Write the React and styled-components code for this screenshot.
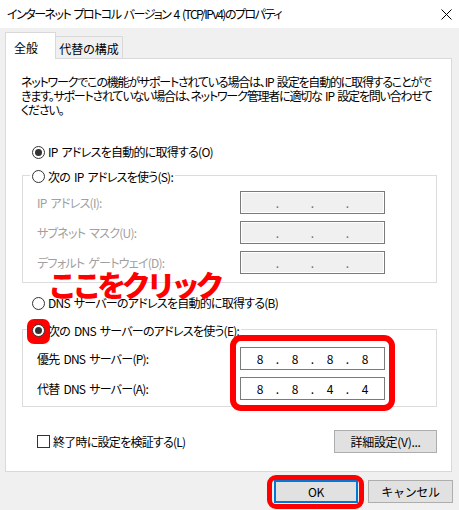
import React from "react";
import styled, { createGlobalStyle } from "styled-components";

const GlobalStyle = createGlobalStyle`
  html, body { margin: 0; padding: 0; background: #f0f0f0; }
  body {
    font-family: "Noto Sans CJK JP", "Noto Sans", sans-serif;
    font-size: 12px;
    color: #000;
    letter-spacing: -0.75px;
    word-spacing: 2px;
    font-feature-settings: "palt" 1;
  }
  * { box-sizing: border-box; }
`;

const Window = styled.div`
  width: 459px;
  height: 510px;
  background: #f0f0f0;
  display: flex;
  flex-direction: column;
  overflow: hidden;
`;

const TitleBar = styled.div`
  height: 28px;
  flex-shrink: 0;
  background: #fff;
  display: flex;
  align-items: center;
  justify-content: space-between;
  padding: 0 7px 0 7px;
`;

const Title = styled.span`
  font-size: 12px;
  line-height: 16px;
  letter-spacing: -1.5px;
  word-spacing: 2px;
  white-space: nowrap;
`;

const CloseButton = styled.span`
  display: flex;
  width: 11px;
  height: 11px;
`;

const TabRow = styled.div`
  display: flex;
  align-items: flex-end;
  height: 26px;
  margin-top: 4px;
  padding-left: 5px;
`;

const Tab = styled.div`
  position: relative;
  z-index: 1;
  display: flex;
  align-items: center;
  white-space: nowrap;
  width: ${(p) => p.$w}px;
  height: ${(p) => (p.$active ? 27 : 22)}px;
  margin-bottom: ${(p) => (p.$active ? -1 : 0)}px;
  padding-top: ${(p) => (p.$active ? 3 : 2)}px;
  justify-content: ${(p) => (p.$active ? "flex-start" : "center")};
  padding-left: ${(p) => (p.$active ? 8 : 0)}px;
  background: ${(p) => (p.$active ? "#fff" : "#f0f0f0")};
  border: 1px solid #d9d9d9;
  border-bottom: none;
  border-left: ${(p) => (p.$active ? "1px solid #d9d9d9" : "none")};
  letter-spacing: 0;
`;

const Panel = styled.div`
  position: relative;
  margin: 0 7px 0 5px;
  background: #fff;
  border: 1px solid #d9d9d9;
  padding: 16px 0 18px;
  display: flex;
  flex-direction: column;
`;

const Description = styled.p`
  margin: 0 0 0 15px;
  line-height: 14px;
  letter-spacing: -1.2px;
  word-spacing: 2px;
  white-space: nowrap;
`;

const RadioLine = styled.div`
  display: flex;
  margin-top: ${(p) => p.$mt}px;
  padding-left: 26px;
`;

const RadioRow = styled.span`
  display: inline-flex;
  align-items: center;
  gap: 3px;
  height: 16px;
  line-height: 16px;
  white-space: nowrap;
`;

const RadioMark = styled.span`
  position: relative;
  display: inline-flex;
  flex-shrink: 0;
`;

const RadioCircle = styled.span`
  position: relative;
  z-index: 1;
  width: 13px;
  height: 13px;
  border-radius: 50%;
  border: 1px solid #333;
  background: #fff;
  display: inline-flex;
  align-items: center;
  justify-content: center;
  &::after {
    content: "";
    width: 7px;
    height: 7px;
    border-radius: 50%;
    background: ${(p) => (p.$checked ? "#333" : "transparent")};
  }
`;

const RedBlob = styled.span`
  position: absolute;
  left: -5px;
  right: -5px;
  top: -5px;
  bottom: -7px;
  background: #ff0000;
  border-radius: 7px;
`;

const Group = styled.fieldset`
  margin: ${(p) => p.$mt}px 14px 0 16px;
  padding: ${(p) => p.$pt}px 51px ${(p) => p.$pb}px 14px;
  border: 1px solid #dcdcdc;
  min-width: 0;
`;

const Legend = styled.legend`
  padding: 0 2px;
  margin-left: -7px;
  height: 16px;
  line-height: 16px;
`;

const GroupBody = styled.div`
  display: flex;
  justify-content: space-between;
`;

const LabelCol = styled.div`
  display: flex;
  flex-direction: column;
  gap: 7px;
`;

const FieldLabel = styled.div`
  height: 23px;
  display: flex;
  align-items: center;
  white-space: nowrap;
  color: ${(p) => (p.$disabled ? "#a0a0a0" : "#000")};
`;

const InputCol = styled.div`
  position: relative;
  display: flex;
  flex-direction: column;
  gap: 7px;
`;

const IpBox = styled.div`
  width: 145px;
  height: 23px;
  border: 1px solid #7a7a7a;
  background: ${(p) => (p.$disabled ? "#f0f0f0" : "#fff")};
  box-shadow: ${(p) => (p.$disabled ? "inset 0 0 0 1px #fff" : "none")};
  display: flex;
  align-items: center;
  padding: 0 5px;
  font-size: 12px;
  letter-spacing: 0;
`;

const Octet = styled.span`
  width: 28px;
  text-align: center;
`;

const Dot = styled.span`
  width: 7px;
  text-align: center;
  color: ${(p) => (p.$disabled ? "#6d6d6d" : "#000")};
`;

const RedFrame = styled.span`
  position: absolute;
  left: -10px;
  right: -10px;
  top: -12px;
  bottom: -11px;
  border: 6px solid #ff0000;
  border-radius: 11px;
  pointer-events: none;
`;

const Annotation = styled.span`
  position: absolute;
  left: 42px;
  top: 209px;
  font-size: 29px;
  line-height: 32px;
  font-weight: 900;
  color: #ff0000;
  letter-spacing: -4.4px;
  white-space: nowrap;
  font-feature-settings: normal;
`;

const CheckRow = styled.div`
  display: flex;
  align-items: center;
  justify-content: space-between;
  margin-top: 23px;
  padding: 0 14px 0 31px;
`;

const CheckLabel = styled.span`
  display: inline-flex;
  align-items: center;
  gap: 3px;
  white-space: nowrap;
`;

const CheckBox = styled.span`
  width: 13px;
  height: 13px;
  border: 1px solid #333;
  background: #fff;
  flex-shrink: 0;
`;

const Button = styled.button`
  position: relative;
  width: ${(p) => p.$w}px;
  height: 23px;
  padding: 0;
  font-family: inherit;
  font-size: 12px;
  letter-spacing: -0.3px;
  color: #000;
  background: #e1e1e1;
  border: 1px solid ${(p) => (p.$default ? "#0078d7" : "#adadad")};
  box-shadow: ${(p) => (p.$default ? "inset 0 0 0 1px #0078d7" : "none")};
  white-space: nowrap;
`;

const ButtonWrap = styled.span`
  position: relative;
  display: inline-flex;
`;

const ButtonFrame = styled.span`
  position: absolute;
  left: -7px;
  right: -6px;
  top: -5px;
  bottom: -6px;
  border: 5px solid #ff0000;
  border-radius: 9px;
  pointer-events: none;
`;

const Footer = styled.div`
  display: flex;
  justify-content: flex-end;
  gap: 10px;
  padding: 8px 6px 0 0;
`;

const Radio = ({ checked, highlight }) => (
  <RadioMark>
    {highlight && <RedBlob />}
    <RadioCircle $checked={checked} />
  </RadioMark>
);

const IpField = ({ value, disabled }) => {
  const parts = value ? value.split(".") : ["", "", "", ""];
  const out = [];
  parts.forEach((p, i) => {
    out.push(<Octet key={"o" + i}>{p}</Octet>);
    if (i < 3)
      out.push(
        <Dot key={"d" + i} $disabled={disabled}>
          .
        </Dot>
      );
  });
  return <IpBox $disabled={disabled}>{out}</IpBox>;
};

export default function App() {
  return (
    <>
      <GlobalStyle />
      <Window>
        <TitleBar>
          <Title>インターネット プロトコル バージョン 4 (TCP/IPv4)のプロパティ</Title>
          <CloseButton>
            <svg width="11" height="11" viewBox="0 0 11 11">
              <path d="M0.5 0.5 L10.5 10.5 M10.5 0.5 L0.5 10.5" stroke="#000" strokeWidth="1" />
            </svg>
          </CloseButton>
        </TitleBar>
        <TabRow>
          <Tab $active $w={51}>全般</Tab>
          <Tab $w={67}>代替の構成</Tab>
        </TabRow>
        <Panel>
          <Description>
            ネットワークでこの機能がサポートされている場合は、IP 設定を自動的に取得することがで
            <br />
            きます。サポートされていない場合は、ネットワーク管理者に適切な IP 設定を問い合わせて
            <br />
            ください。
          </Description>

          <RadioLine $mt={27}>
            <RadioRow>
              <Radio checked />
              IP アドレスを自動的に取得する(O)
            </RadioRow>
          </RadioLine>

          <Group $mt={7} $pt={8} $pb={8}>
            <Legend>
              <RadioRow>
                <Radio />
                次の IP アドレスを使う(S):
              </RadioRow>
            </Legend>
            <GroupBody>
              <LabelCol>
                <FieldLabel $disabled>IP アドレス(I):</FieldLabel>
                <FieldLabel $disabled>サブネット マスク(U):</FieldLabel>
                <FieldLabel $disabled>デフォルト ゲートウェイ(D):</FieldLabel>
              </LabelCol>
              <InputCol>
                <IpField disabled />
                <IpField disabled />
                <IpField disabled />
              </InputCol>
            </GroupBody>
          </Group>

          <RadioLine $mt={12}>
            <RadioRow>
              <Radio />
              DNS サーバーのアドレスを自動的に取得する(B)
            </RadioRow>
          </RadioLine>

          <Group $mt={10} $pt={10} $pb={6}>
            <Legend>
              <RadioRow>
                <Radio checked highlight />
                次の DNS サーバーのアドレスを使う(E):
              </RadioRow>
            </Legend>
            <GroupBody>
              <LabelCol>
                <FieldLabel>優先 DNS サーバー(P):</FieldLabel>
                <FieldLabel>代替 DNS サーバー(A):</FieldLabel>
              </LabelCol>
              <InputCol>
                <IpField value="8.8.8.8" />
                <IpField value="8.8.4.4" />
                <RedFrame />
              </InputCol>
            </GroupBody>
          </Group>

          <CheckRow>
            <CheckLabel>
              <CheckBox />
              終了時に設定を検証する(L)
            </CheckLabel>
            <Button $w={103}>詳細設定(V)...</Button>
          </CheckRow>

          <Annotation>ここをクリック</Annotation>
        </Panel>
        <Footer>
          <ButtonWrap>
            <Button $w={84} $default>OK</Button>
            <ButtonFrame />
          </ButtonWrap>
          <Button $w={85}>キャンセル</Button>
        </Footer>
      </Window>
    </>
  );
}
